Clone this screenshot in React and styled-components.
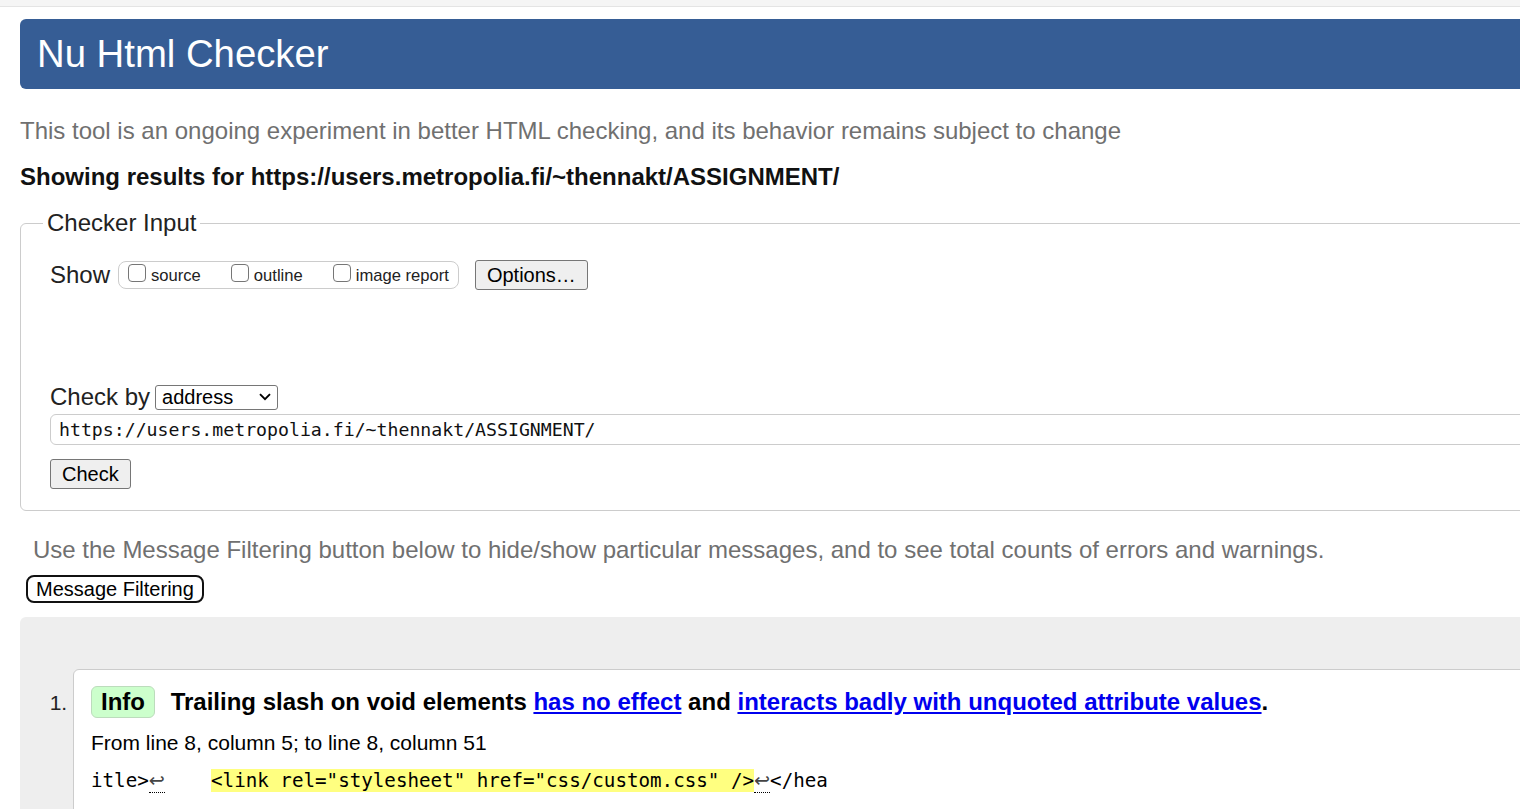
import React from "react";
import styled, { createGlobalStyle } from "styled-components";

const GlobalStyle = createGlobalStyle`
  html, body { margin: 0; padding: 0; overflow: hidden; background: #fff; }
  body { font-family: "Liberation Sans", Arial, sans-serif; color: #222; }
`;

const TopStrip = styled.div`
  height: 6px;
  background: #f5f5f5;
  border-bottom: 1px solid #e4e4e4;
`;

const Page = styled.div`
  width: 1600px;
  padding: 12px 0 40px 20px;
`;

const Header = styled.header`
  height: 70px;
  background: #365d95;
  border-radius: 6px;
  padding-left: 17px;
  display: flex;
  align-items: center;
`;

const Title = styled.h1`
  margin: 0;
  font-size: 38.3px;
  font-weight: 400;
  color: #fff;
`;

const Lead = styled.p`
  margin: ${({ $indent }) => ($indent ? "25px 0 0" : "28px 0 0")};
  padding-left: ${({ $indent }) => ($indent ? "13px" : "0")};
  font-size: 24px;
  line-height: 28px;
  color: #707070;
`;

const ResultsFor = styled.p`
  margin: 18px 0 0;
  font-size: 24px;
  line-height: 28px;
  font-weight: 700;
  color: #111;
`;

const Fieldset = styled.fieldset`
  margin: 18px 0 0;
  padding: 23px 0 21px 29px;
  border: 1px solid #ccc;
  border-radius: 6px;
  min-width: 0;
`;

const Legend = styled.legend`
  margin-left: -7px;
  padding: 0 4px;
  font-size: 24px;
  line-height: 28px;
  color: #222;
`;

const Row = styled.div`
  display: flex;
  align-items: center;
  margin-top: ${({ $top }) => $top || 0}px;
  font-size: 24px;
  color: #222;
`;

const CheckGroup = styled.div`
  display: flex;
  align-items: center;
  height: 26px;
  margin-left: 8px;
  padding: 0 9px;
  border: 1px solid #ccc;
  border-radius: 8px;
  gap: 30px;
`;

const CheckLabel = styled.label`
  display: flex;
  align-items: center;
  padding-top: 2px;
  font-size: 16.6px;
  color: #222;
`;

const Box = styled.input.attrs({ type: "checkbox" })`
  appearance: none;
  margin: 0 5px 6px 0;
  width: 18px;
  height: 18px;
  border: 1.5px solid #767676;
  border-radius: 4px;
  background: #fff;
`;

const Button = styled.button`
  height: 30px;
  margin-left: ${({ $left }) => $left || 0}px;
  padding: 0 11px;
  font-family: "Liberation Sans", Arial, sans-serif;
  font-size: 20px;
  color: #000;
  background: #efefef;
  border: 1px solid #767676;
  border-radius: 3px;
`;

const SelectWrap = styled.span`
  position: relative;
  display: inline-flex;
  margin-left: 5px;
`;

const Select = styled.select`
  appearance: none;
  width: 123px;
  height: 25px;
  padding: 0 0 0 6px;
  font-family: "Liberation Sans", Arial, sans-serif;
  font-size: 20px;
  color: #000;
  background: #fff;
  border: 1px solid #767676;
  border-radius: 3px;
`;

const Chevron = styled.svg`
  position: absolute;
  right: 7px;
  top: 8px;
  pointer-events: none;
`;

const UrlInput = styled.input`
  display: block;
  box-sizing: border-box;
  width: 1600px;
  height: 31px;
  margin: 3px 0 14px;
  padding: 0 8px;
  font-family: "DejaVu Sans Mono", "Liberation Mono", monospace;
  font-size: 18.2px;
  color: #111;
  border: 1px solid #ccc;
  border-radius: 6px;
`;

const FilterButton = styled.button`
  display: block;
  height: 28px;
  margin: 11px 0 0 6px;
  padding: 0 8px;
  font-family: "Liberation Sans", Arial, sans-serif;
  font-size: 20px;
  color: #000;
  background: #fff;
  border: 2px solid #111;
  border-radius: 8px;
`;

const Results = styled.div`
  margin-top: 14px;
  background: #eee;
  border-radius: 6px;
  padding: 52px 0 0 0;
`;

const List = styled.ol`
  margin: 0;
  padding-left: 53px;
  font-size: 21px;
  color: #222;
`;

const Item = styled.li`
  background: #fff;
  border: 1px solid #ccc;
  border-radius: 6px;
  padding: 16px 17px 20px;
  &::marker { color: #222; }
`;

const MsgTitle = styled.p`
  margin: 0;
  font-size: 24px;
  line-height: 32px;
  font-weight: 700;
  color: #000;
`;

const Badge = styled.strong`
  display: inline-block;
  margin-right: 9px;
  padding: 0 9px;
  line-height: 30px;
  background: #ccffcc;
  border: 1px solid #bcdcbc;
  border-radius: 6px;
`;

const Link = styled.a`
  color: #0000ee;
  text-decoration: underline;
`;

const Location = styled.p`
  margin: 12px 0 0;
  font-size: 21px;
  line-height: 26px;
  color: #000;
`;

const Extract = styled.p`
  margin: 12px 0 0;
  font-family: "DejaVu Sans Mono", "Liberation Mono", monospace;
  font-size: 19.2px;
  line-height: 26px;
  color: #000;
  white-space: pre;
`;

const Lf = styled.span`
  font-family: "DejaVu Sans", sans-serif;
  color: #444;
  border-bottom: 1px dotted #000;
`;

const Mark = styled.b`
  font-weight: 400;
  background: #ffff80;
`;

const url = "https://users.metropolia.fi/~thennakt/ASSIGNMENT/";

export default function App() {
  return (
    <>
      <GlobalStyle />
      <TopStrip />
      <Page>
        <Header>
          <Title>Nu Html Checker</Title>
        </Header>
        <Lead>This tool is an ongoing experiment in better HTML checking, and its behavior remains subject to change</Lead>
        <ResultsFor>Showing results for {url}</ResultsFor>

        <Fieldset>
          <Legend>Checker Input</Legend>
          <Row>
            Show
            <CheckGroup>
              <CheckLabel><Box />source</CheckLabel>
              <CheckLabel><Box />outline</CheckLabel>
              <CheckLabel><Box />image report</CheckLabel>
            </CheckGroup>
            <Button $left={16}>Options…</Button>
          </Row>
          <Row $top={93}>
            Check by
            <SelectWrap>
              <Select defaultValue="address">
                <option value="address">address</option>
                <option value="file">file upload</option>
                <option value="text">text input</option>
              </Select>
              <Chevron width="12" height="8" viewBox="0 0 12 8">
                <path d="M1 1.2l5 5 5-5" fill="none" stroke="#000" strokeWidth="1.9" />
              </Chevron>
            </SelectWrap>
          </Row>
          <UrlInput defaultValue={url} />
          <Button>Check</Button>
        </Fieldset>

        <Lead $indent>
          Use the Message Filtering button below to hide/show particular messages, and to see total counts of errors and warnings.
        </Lead>
        <FilterButton>Message Filtering</FilterButton>

        <Results>
          <List>
            <Item>
              <MsgTitle>
                <Badge>Info</Badge> Trailing slash on void elements{" "}
                <Link href="#">has no effect</Link> and{" "}
                <Link href="#">interacts badly with unquoted attribute values</Link>.
              </MsgTitle>
              <Location>From line 8, column 5; to line 8, column 51</Location>
              <Extract>
                itle&gt;<Lf>↩</Lf>    <Mark>&lt;link rel="stylesheet" href="css/custom.css" /&gt;</Mark><Lf>↩</Lf>&lt;/hea
              </Extract>
            </Item>
          </List>
        </Results>
      </Page>
    </>
  );
}
